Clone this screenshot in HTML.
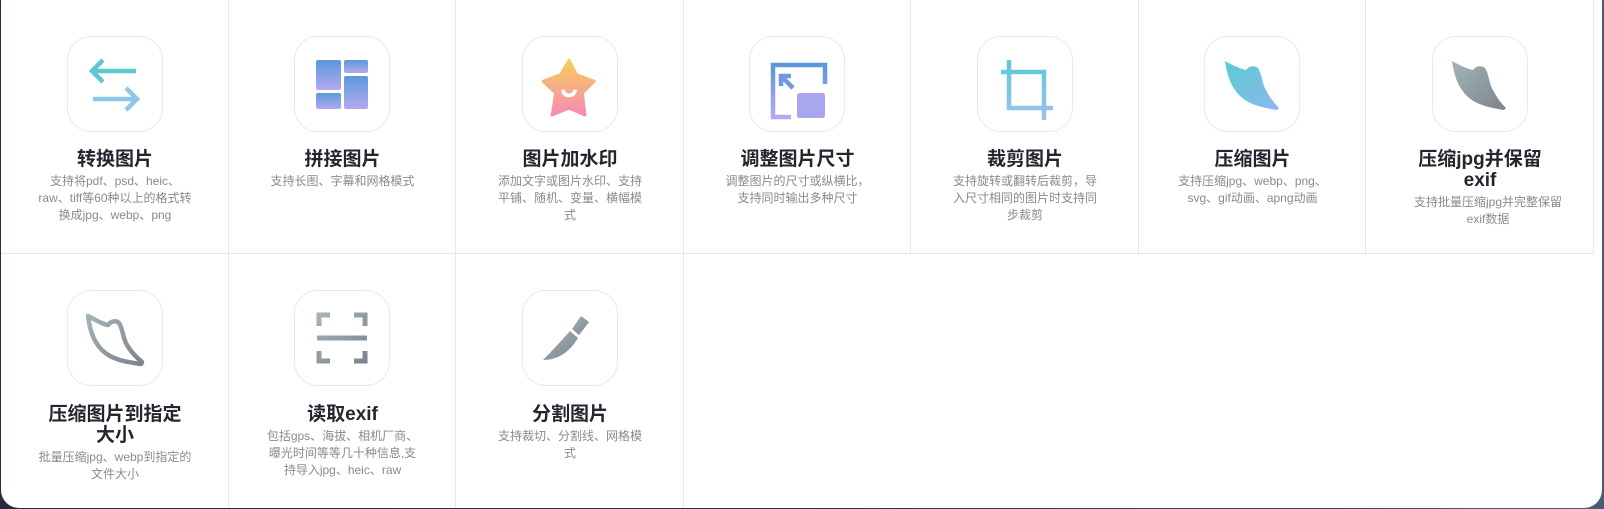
<!DOCTYPE html>
<html><head><meta charset="utf-8"><style>
*{margin:0;padding:0;box-sizing:border-box}
html,body{width:1604px;height:509px;overflow:hidden}
body{background:linear-gradient(90deg,#2c2b3a 0%,#343448 60%,#4b5b72 100%);font-family:"Liberation Sans","Noto Sans CJK SC",sans-serif}
.card{position:absolute;left:1px;top:-16px;width:1601px;height:524px;background:#fff;border-radius:18px;overflow:hidden}
.cell{position:absolute;width:227.5px;height:254px;border-right:1px solid #e8e8e8;text-align:center}
.r1{top:16px;border-bottom:1px solid #e8e8e8}
.r2{top:270px}
.box{position:absolute;left:65.75px;top:36px;width:96px;height:96px;border:1.5px solid #e9e9e9;border-radius:24px}
.box svg{position:absolute;left:-1.5px;top:-1.5px}
.t{position:absolute;left:36px;width:156px;top:149px;font-size:19px;font-weight:bold;line-height:21px;color:#25252f}
.d{margin:3px auto 0;width:154px;font-size:12px;line-height:17px;color:#8a8a8a;font-weight:normal}
</style></head><body>
<div class="card">
<svg width="0" height="0" style="position:absolute"><defs>
<linearGradient id="gb" x1="0" y1="0" x2="0" y2="1"><stop offset="0" stop-color="#5b97db"/><stop offset="1" stop-color="#b5a9f1"/></linearGradient>
<linearGradient id="gs" x1="0" y1="0" x2="0" y2="1"><stop offset="0" stop-color="#f5cf5c"/><stop offset="1" stop-color="#f68ab2"/></linearGradient>
<linearGradient id="gc" x1="0" y1="0" x2="0" y2="1"><stop offset="0" stop-color="#5dcad3"/><stop offset="1" stop-color="#9cc2ef"/></linearGradient>
<linearGradient id="gl" x1="0" y1="0" x2="1" y2="1"><stop offset="0" stop-color="#5ccbd2"/><stop offset="1" stop-color="#8bb7ee"/></linearGradient>
<linearGradient id="gg" x1="0" y1="0" x2="1" y2="1"><stop offset="0" stop-color="#a3b4b6"/><stop offset="1" stop-color="#7c848e"/></linearGradient>
</defs></svg>

<div class="cell r1" style="left:0">
<div class="box"><svg width="96" height="96" viewBox="0 0 96 96" fill="none" stroke-width="4.5">
<path d="M70 35H27M37 24L26 35L37 46" stroke="#5ec8cf"/><path d="M27 63H71M60 52L71 63L60 74" stroke="#8ec7ea"/></svg></div>
<div class="t">转换图片<div class="d">支持将pdf、psd、heic、raw、tiff等60种以上的格式转换成jpg、webp、png</div></div></div>

<div class="cell r1" style="left:227.5px">
<div class="box"><svg width="96" height="96" viewBox="0 0 96 96"><g fill="url(#gb)">
<rect x="22" y="24" width="25" height="30" rx="2"/><rect x="50" y="24" width="24" height="13" rx="2"/><rect x="50" y="40" width="24" height="33" rx="2"/><rect x="22" y="57" width="25" height="16" rx="2"/></g></svg></div>
<div class="t">拼接图片<div class="d">支持长图、字幕和网格模式</div></div></div>

<div class="cell r1" style="left:455px">
<div class="box"><svg width="96" height="96" viewBox="0 0 96 96"><g transform="translate(48 52) scale(0.85) translate(-48 -52)">
<path d="M48 19L57 36L78 44L64 58L67 84L48 76L28 84L32 58L17 44L38 36Z" fill="url(#gs)" stroke="url(#gs)" stroke-width="3" stroke-linejoin="round"/>
<path d="M41 54C41 63 55 63 55 54" stroke="#fff" stroke-width="4.5" fill="none"/></g></svg></div>
<div class="t">图片加水印<div class="d">添加文字或图片水印、支持平铺、随机、变量、横幅模式</div></div></div>

<div class="cell r1" style="left:682.5px">
<div class="box"><svg width="96" height="96" viewBox="0 0 96 96" fill="none">
<path d="M76 48V29H24V81H42" stroke="url(#gb)" stroke-width="4.5"/>
<rect x="48" y="57" width="28" height="25" rx="2.5" fill="#a9a6ee"/>
<path d="M44 52L33 41M32 50V40H42" stroke="#6c9ae0" stroke-width="4.5"/></svg></div>
<div class="t">调整图片尺寸<div class="d">调整图片的尺寸或纵横比，支持同时输出多种尺寸</div></div></div>

<div class="cell r1" style="left:910px">
<div class="box"><svg width="96" height="96" viewBox="0 0 96 96" fill="none" stroke="url(#gc)" stroke-width="4.5">
<path d="M33 24V72H77M25 36H68V84"/></svg></div>
<div class="t">裁剪图片<div class="d">支持旋转或翻转后裁剪，导入尺寸相同的图片时支持同步裁剪</div></div></div>

<div class="cell r1" style="left:1137.5px">
<div class="box"><svg width="96" height="96" viewBox="0 0 96 96">
<path d="M21 25C30 30 37 33 42 34C45 30 50 29 54 32C58 38 58 48 62 54C66 62 70 67 75 72L73 74C60 72 45 69 36 60C26 50 23 38 21 25Z" fill="url(#gl)"/></svg></div>
<div class="t">压缩图片<div class="d">支持压缩jpg、webp、png、svg、gif动画、apng动画</div></div></div>

<div class="cell r1" style="left:1365px">
<div class="box"><svg width="96" height="96" viewBox="0 0 96 96">
<path d="M21 25C30 30 37 33 42 34C45 30 50 29 54 32C58 38 58 48 62 54C66 62 70 67 75 72L73 74C60 72 45 69 36 60C26 50 23 38 21 25Z" fill="url(#gg)"/></svg></div>
<div class="t" style="left:45px;width:138px">压缩jpg并保留exif<div class="d">支持批量压缩jpg并完整保留exif数据</div></div></div>

<div class="cell r2" style="left:0">
<div class="box"><svg width="96" height="96" viewBox="0 0 96 96">
<path d="M22 26C31 31 37 34 42 35C45 31 50 30 53 33C57 39 57 49 61 55C65 62 70 67 76 72L75 74C60 72 46 70 36 60C27 51 24 40 22 26Z" fill="none" stroke="url(#gg)" stroke-width="4.5" stroke-linejoin="round"/></svg></div>
<div class="t" style="top:150px">压缩图片到指定<br>大小<div class="d">批量压缩jpg、webp到指定的文件大小</div></div></div>

<div class="cell r2" style="left:227.5px">
<div class="box"><svg width="96" height="96" viewBox="0 0 96 96" fill="none" stroke="url(#gg)" stroke-width="5">
<path d="M25 36V25H36M60 25H71V36M71 61V71H60M36 71H25V61M23 48H73"/></svg></div>
<div class="t" style="top:150px">读取exif<div class="d">包括gps、海拔、相机厂商、曝光时间等等几十种信息,支持导入jpg、heic、raw</div></div></div>

<div class="cell r2" style="left:455px">
<div class="box"><svg width="96" height="96" viewBox="0 0 96 96" fill="url(#gg)">
<path d="M60 26L68 32L58 45L51 39Z"/><path d="M49 41L57 48C49 61 38 70 22 70C32 60 40 51 49 41Z"/></svg></div>
<div class="t" style="top:150px">分割图片<div class="d">支持裁切、分割线、网格模式</div></div></div>
</div>
</body></html>
